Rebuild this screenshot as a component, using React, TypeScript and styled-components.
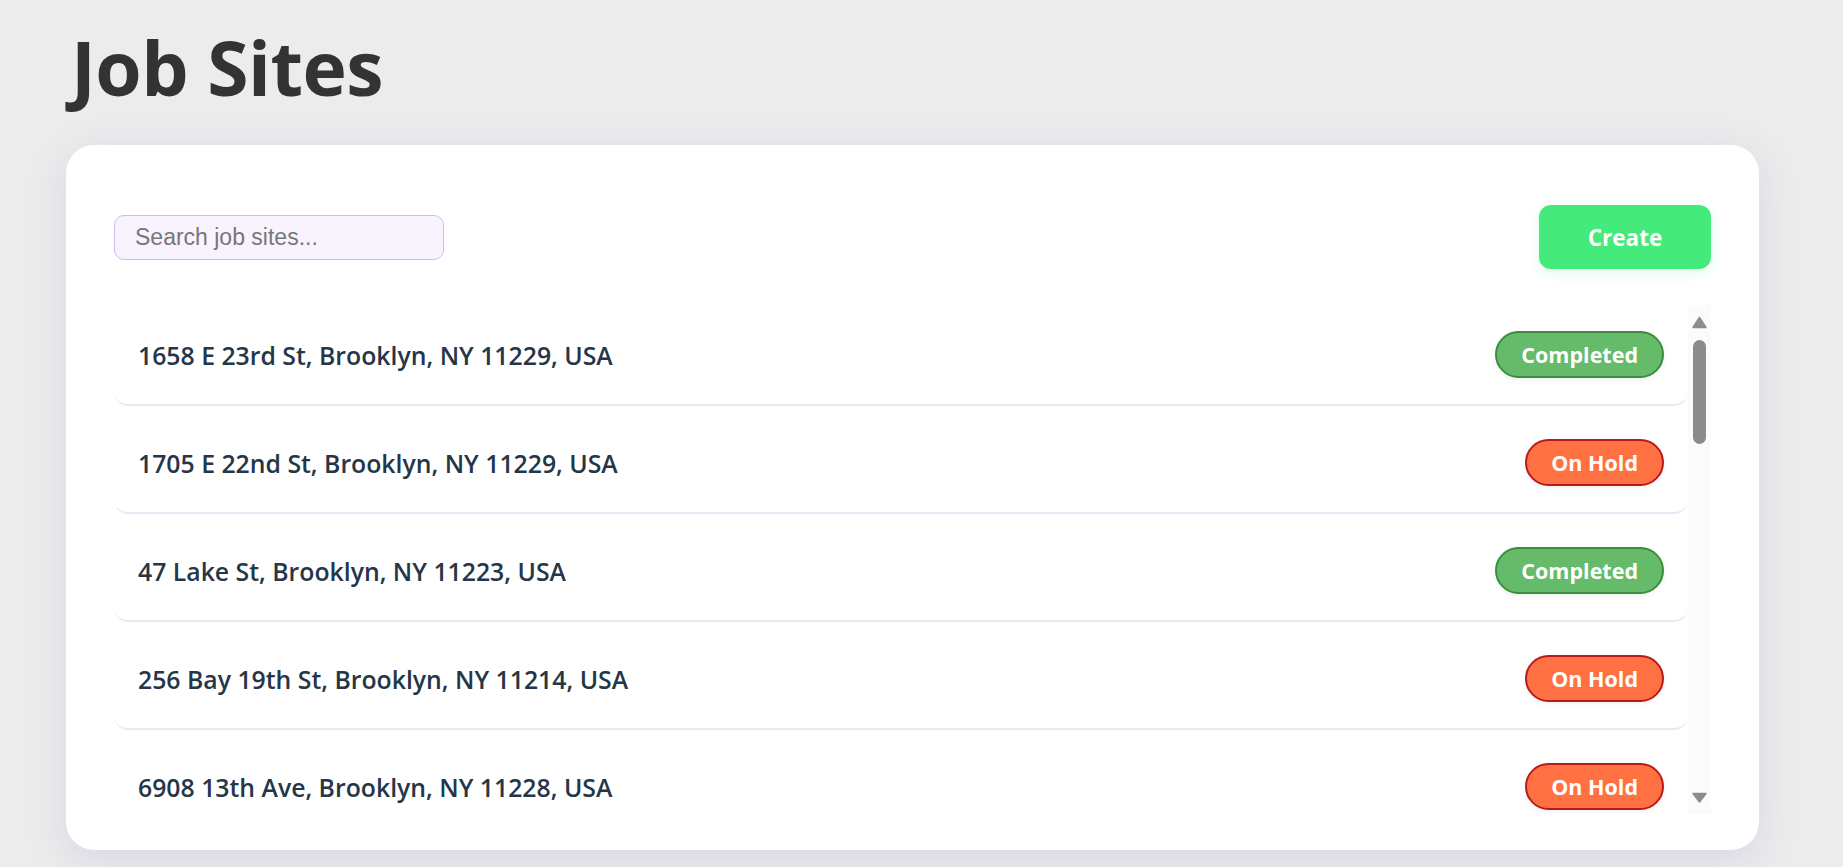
import React, { useState, useRef, useLayoutEffect } from 'react';
import styled, { createGlobalStyle } from 'styled-components';

type Status = 'Completed' | 'On Hold';

interface JobSite {
  id: number;
  address: string;
  status: Status;
}

const jobSites: JobSite[] = [
  { id: 1, address: '1658 E 23rd St, Brooklyn, NY 11229, USA', status: 'Completed' },
  { id: 2, address: '1705 E 22nd St, Brooklyn, NY 11229, USA', status: 'On Hold' },
  { id: 3, address: '47 Lake St, Brooklyn, NY 11223, USA', status: 'Completed' },
  { id: 4, address: '256 Bay 19th St, Brooklyn, NY 11214, USA', status: 'On Hold' },
  { id: 5, address: '6908 13th Ave, Brooklyn, NY 11228, USA', status: 'On Hold' },
  { id: 6, address: '2102 Avenue U, Brooklyn, NY 11229, USA', status: 'Completed' },
  { id: 7, address: '1421 Kings Hwy, Brooklyn, NY 11229, USA', status: 'On Hold' },
  { id: 8, address: '8512 18th Ave, Brooklyn, NY 11214, USA', status: 'Completed' },
  { id: 9, address: '2875 W 8th St, Brooklyn, NY 11224, USA', status: 'Completed' },
  { id: 10, address: '1960 Ocean Ave, Brooklyn, NY 11230, USA', status: 'On Hold' },
  { id: 11, address: '734 Avenue P, Brooklyn, NY 11223, USA', status: 'Completed' },
  { id: 12, address: '3011 Nostrand Ave, Brooklyn, NY 11229, USA', status: 'On Hold' },
  { id: 13, address: '168 Bay Ridge Pkwy, Brooklyn, NY 11209, USA', status: 'Completed' },
  { id: 14, address: '5420 Fort Hamilton Pkwy, Brooklyn, NY 11219, USA', status: 'On Hold' },
  { id: 15, address: '2366 86th St, Brooklyn, NY 11214, USA', status: 'Completed' },
  { id: 16, address: '1219 Avenue J, Brooklyn, NY 11230, USA', status: 'Completed' },
  { id: 17, address: '410 Neptune Ave, Brooklyn, NY 11224, USA', status: 'On Hold' },
  { id: 18, address: '2734 Coney Island Ave, Brooklyn, NY 11235, USA', status: 'Completed' },
  { id: 19, address: '1802 Avenue M, Brooklyn, NY 11230, USA', status: 'On Hold' },
  { id: 20, address: '915 Brighton Beach Ave, Brooklyn, NY 11235, USA', status: 'Completed' },
];

const GlobalStyle = createGlobalStyle`
  body {
    margin: 0;
    background: #ececec;
    font-family: "Open Sans", "Noto Sans", sans-serif;
  }
`;

const Page = styled.div`
  padding: 27px 84px 17px 66px;
`;

const Title = styled.h1`
  margin: 0 0 38px;
  padding-left: 5px;
  font-size: 75px;
  line-height: 80px;
  font-weight: 700;
  color: #333333;
  letter-spacing: -0.5px;
`;

const Card = styled.div`
  box-sizing: border-box;
  height: 705px;
  background: #ffffff;
  border-radius: 28px;
  padding: 60px 48px 36px;
  box-shadow: 0 10px 40px rgba(120, 100, 200, 0.16);
`;

const Header = styled.div`
  display: flex;
  justify-content: space-between;
  align-items: center;
  height: 64px;
  margin-bottom: 36px;
`;

const SearchInput = styled.input`
  box-sizing: border-box;
  width: 330px;
  height: 45px;
  padding: 0 20px;
  border: 1.5px solid #cdbdf0;
  border-radius: 10px;
  background: #f8f3fd;
  font-family: "Liberation Sans", Arial, sans-serif;
  font-size: 23px;
  color: #333;
  outline: none;

  &::placeholder {
    color: #777777;
  }
`;

const CreateButton = styled.button`
  width: 172px;
  height: 64px;
  border: none;
  border-radius: 12px;
  background: #45ea7d;
  color: #ffffff;
  font-family: "Open Sans", "Noto Sans", sans-serif;
  font-size: 22.5px;
  font-weight: 700;
  cursor: pointer;
  box-shadow: 0 4px 12px rgba(69, 234, 125, 0.18);
`;

const ListFrame = styled.div`
  display: flex;
  height: 509px;
`;

const Scroller = styled.div`
  flex: 1;
  overflow-y: scroll;
  scrollbar-width: none;
  display: flex;
  flex-direction: column;
  gap: 7px;

  &::-webkit-scrollbar {
    display: none;
  }
`;

const Rail = styled.div`
  width: 23px;
  flex-shrink: 0;
  display: flex;
  flex-direction: column;
  background: #fbfbfc;
`;

const RailArrow = styled.svg`
  display: block;
  width: 23px;
  height: 28px;
  flex-shrink: 0;
`;

const RailTrack = styled.div`
  flex: 1;
  padding: 7px 5px;
  overflow: hidden;
`;

const Thumb = styled.div`
  width: 13px;
  border-radius: 7px;
  background: #8c8c8c;
`;

const Row = styled.div`
  box-sizing: border-box;
  flex-shrink: 0;
  display: flex;
  justify-content: space-between;
  align-items: center;
  height: 101px;
  padding: 0 24px;
  background: #ffffff;
  border-bottom: 2px solid #ece6f7;
  border-radius: 14px;
`;

const Address = styled.span`
  font-size: 24.8px;
  font-weight: 600;
  color: #253648;
`;

const Badge = styled.span<{ $status: Status }>`
  box-sizing: border-box;
  height: 47px;
  display: inline-flex;
  align-items: center;
  padding: 0 24px;
  border-radius: 999px;
  border: 2px solid ${p => (p.$status === 'Completed' ? '#3a8d3e' : '#b71c1c')};
  background: ${p => (p.$status === 'Completed' ? '#66bb6a' : '#ff7043')};
  color: #ffffff;
  font-size: 21.5px;
  font-weight: 700;
  box-shadow: 0 2px 6px rgba(0, 0, 0, 0.06);
`;

const App: React.FC = () => {
  const [query, setQuery] = useState('');
  const scrollRef = useRef<HTMLDivElement>(null);
  const trackRef = useRef<HTMLDivElement>(null);
  const [thumb, setThumb] = useState({ size: 104, offset: 0 });

  const filtered = jobSites.filter(site =>
    site.address.toLowerCase().includes(query.toLowerCase())
  );

  const measure = () => {
    const el = scrollRef.current;
    const track = trackRef.current;
    if (!el || !track) return;
    const trackLen = track.clientHeight - 14;
    const ratio = el.clientHeight / el.scrollHeight;
    const size = Math.max(30, trackLen * Math.min(1, ratio));
    const maxScroll = el.scrollHeight - el.clientHeight;
    const offset = maxScroll > 0 ? (el.scrollTop / maxScroll) * (trackLen - size) : 0;
    setThumb({ size, offset });
  };

  useLayoutEffect(measure, [filtered.length]);

  return (
    <>
      <GlobalStyle />
      <Page>
        <Title>Job Sites</Title>
        <Card>
          <Header>
            <SearchInput
              placeholder="Search job sites..."
              value={query}
              onChange={e => setQuery(e.target.value)}
            />
            <CreateButton>Create</CreateButton>
          </Header>
          <ListFrame>
            <Scroller ref={scrollRef} onScroll={measure}>
              {filtered.map(site => (
                <Row key={site.id}>
                  <Address>{site.address}</Address>
                  <Badge $status={site.status}>{site.status}</Badge>
                </Row>
              ))}
            </Scroller>
            <Rail>
              <RailArrow viewBox="0 0 23 28">
                <polygon points="5,22.5 11.5,12.5 18,22.5" fill="#8c8c8c" stroke="#8c8c8c" strokeWidth="1.5" strokeLinejoin="round" />
              </RailArrow>
              <RailTrack ref={trackRef}>
                <Thumb style={{ height: thumb.size, marginTop: thumb.offset }} />
              </RailTrack>
              <RailArrow viewBox="0 0 23 28">
                <polygon points="5,7.5 18,7.5 11.5,16" fill="#8c8c8c" stroke="#8c8c8c" strokeWidth="1.5" strokeLinejoin="round" />
              </RailArrow>
            </Rail>
          </ListFrame>
        </Card>
      </Page>
    </>
  );
};

export default App;
